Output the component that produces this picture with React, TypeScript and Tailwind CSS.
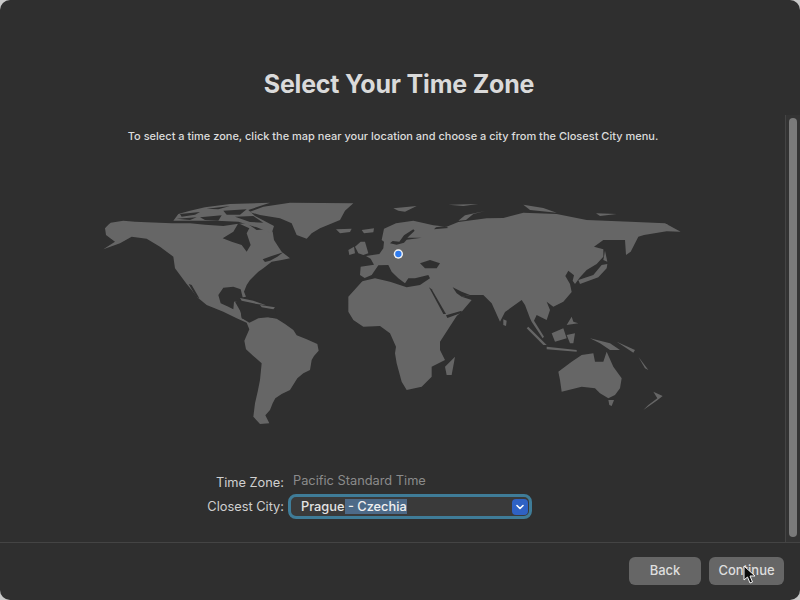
const LAND = "#666666"
const SEA = "#2f2f2f"

// coordinates are 3x page pixels, origin at page (90,190)
const americas = [
  "M45 115L55 104L62 98L100 92L135 95L170 97L245 100L300 100L345 104L400 108L440 102L470 100L500 120L530 118L548 125L552 150L565 170L575 185L600 205L575 210L545 215L520 235L505 245L495 255L480 270L470 285L462 305L468 320L458 322L452 298L430 290L400 293L385 315L392 340L415 350L430 358L432 335L462 330L445 345L452 365L456 385L478 398L505 385L535 382L560 386L585 402L610 420L620 436L650 448L682 462L686 482L672 498L665 510L660 540L640 550L622 565L600 600L575 612L556 625L548 640L540 660L526 676L538 700L510 702L490 680L495 640L503 605L510 570L515 520L490 498L468 478L463 452L478 418L470 398L440 385L400 365L350 345L320 320L305 300L290 282L270 255L255 235L250 200L230 185L210 170L170 146L125 140L90 160L40 178L75 155L48 135Z",
  "M250 92L265 72L300 62L345 52L420 42L540 38L475 60L495 78L552 108L545 130L500 112L445 95L380 92L300 92Z",
  "M478 66L520 50L600 38L790 40L765 62L750 90L690 115L665 130L650 146L620 135L605 100L570 85L510 75Z",
  "M738 118L785 116L780 126L750 130Z",
]
const americasSea = [
  "M398 145L430 125L445 100L478 115L470 130L482 165L470 185L455 165L425 155Z",
  "M518 208L545 198L580 187L562 200L540 212L525 216Z",
  "M296 282L305 285L328 325L318 320Z",
  "M270 72L330 66L315 74L275 80Z",
  "M330 82L395 76L385 92L345 90Z",
  "M400 62L470 58L450 74L410 74Z",
  "M435 80L490 78L520 98L480 96Z",
  "M260 86L320 82L300 90Z",
  "M350 56L420 48L385 58Z",
  "M435 335L470 322L525 340L555 355L560 385L510 378L478 392L455 385L452 365Z",
]
const caribbean = [
  "M450 324L490 332L528 346L500 342L455 332Z",
  "M510 345L555 352L550 358L515 352Z",
]
const afroEurasia = [
  "M-90 255L-88 230L-48 224L-58 206L-72 198L-32 192L-20 175L-18 155L-25 150L-18 116L18 100L70 92L130 106L170 110L205 96L290 85L340 84L400 68L500 72L590 90L720 95L825 100L872 125L830 124L762 135L745 140L722 185L708 195L705 150L640 150L612 170L640 178L640 200L620 222L590 240L570 262L555 282L548 272L552 256L535 242L526 258L540 282L545 306L520 335L490 350L470 335L480 360L470 390L440 375L432 392L462 440L458 445L425 395L420 385L405 345L395 330L345 366L330 395L305 340L280 315L240 315L215 320L245 330L215 365L200 378L150 455L150 480L165 510L125 530L125 560L95 590L50 600L35 575L20 520L15 490L18 470L0 430L-30 408L-80 410L-110 390L-125 365L-125 320L-75 265Z",
]
const afroEurasiaSea = [
  "M-95 272L-55 255L-35 226L-5 225L5 245L25 265L45 280L55 265L75 265L115 255L120 265L90 285L50 292L0 275L-45 265L-90 275Z",
  "M90 220L120 210L150 220L140 235L105 235Z",
  "M117 292L125 298L168 372L160 372Z",
  "M168 376L215 362L215 368L172 384Z",
  "M188 292L215 305L240 315L215 320L200 310Z",
  "M0 160L8 153L28 155L42 136L70 118L74 122L52 143L95 143L50 149L42 158L20 164Z",
  "M132 118L175 114L165 108L138 112Z",
]
const islands = [
  "M-105 170L-88 155L-75 155L-65 190L-80 195L-95 190Z",
  "M-125 180L-108 170L-105 190L-122 195Z",
  "M-85 120L-48 115L-50 127L-78 130Z",
  "M195 500L185 555L170 555L165 530Z",
  "M10 55L80 48L45 65L25 62Z",
  "M205 92L225 76L285 63L250 72L228 90Z",
  "M175 44L265 42L220 48Z",
  "M400 44L460 54L500 68L420 60Z",
  "M618 70L680 72L630 78Z",
  "M565 270L610 255L635 225L652 222L650 235L625 262L570 282Z",
  "M645 182L652 215L640 210Z",
  "M415 410L470 465L460 465L410 415Z",
  "M470 470L560 480L560 485L470 478Z",
  "M485 430L520 415L530 445L495 455Z",
  "M530 435L555 430L550 460L540 460Z",
  "M535 350L550 395L565 400L530 405L545 380Z",
  "M600 445L660 460L690 480L660 480L630 460Z",
  "M680 455L735 480L730 488L695 465Z",
  "M745 500L775 540L765 535Z",
  "M505 545L545 515L575 495L610 490L615 515L640 515L650 485L670 530L695 565L690 595L675 615L655 625L630 610L615 595L575 590L515 605L510 570Z",
  "M655 630L672 630L665 648L658 645Z",
  "M760 660L800 632L818 618L790 605L802 625L775 645Z",
  "M340 388L350 392L348 408L340 405Z",
  "M825 102L832 102L832 116L826 116Z",
]

function WorldMap() {
  return (
    <svg width="800" height="260" viewBox="-270 0 2400 780" className="block">
      <g fill={LAND}>
        {americas.map((d) => <path key={d} d={d} />)}
      </g>
      <g fill={SEA}>
        {americasSea.map((d) => <path key={d} d={d} />)}
      </g>
      <g fill={LAND}>
        {caribbean.map((d) => <path key={d} d={d} />)}
      </g>
      <g transform="translate(900 0)">
        <g fill={LAND}>
          {afroEurasia.map((d) => <path key={d} d={d} />)}
        </g>
        <g fill={SEA}>
          {afroEurasiaSea.map((d) => <path key={d} d={d} />)}
        </g>
        <g fill={LAND}>
          {islands.map((d) => <path key={d} d={d} />)}
        </g>
        <circle cx="25" cy="192" r="14" fill="#f2f2f2" />
        <circle cx="25" cy="192" r="9.5" fill="#2f7cf0" />
      </g>
    </svg>
  )
}

export default function App() {
  return (
    <div className="w-[800px] h-[600px] bg-[#c9c9c9] font-['Inter','Liberation_Sans',sans-serif]">
      <div className="relative w-full h-full rounded-[10px] overflow-hidden bg-[#2f2f2f] flex flex-col">
        <main className="flex-1 flex flex-col items-center pt-[68px]">
          <h1 className="text-[25px] leading-[32px] font-bold text-[#dadada] tracking-[-0.2px] -ml-[2px]">Select Your Time Zone</h1>
          <p className="mt-[28px] text-[11px] leading-[16px] font-medium text-[#dcdcdc] -ml-[14px]">
            To select a time zone, click the map near your location and choose a city from the Closest City menu.
          </p>
          <div className="mt-[46px]">
            <WorldMap />
          </div>
          <div className="mt-[22px] self-start grid grid-cols-[284px_244px] gap-x-[4px] gap-y-[1px] items-center text-[12.8px] font-normal text-[#d0d0d0]">
            <span className="text-right leading-[18px]">Time Zone:</span>
            <span className="pl-[5px] pb-[3px] leading-[18px] text-[#8b8b8b]">Pacific Standard Time</span>
            <span className="text-right leading-[18px]">Closest City:</span>
            <div className="h-[25px] rounded-[8px] border-[3px] border-[#3f7c98] bg-[#3a3a3a] flex items-center justify-between pl-[10px] pr-[1px]">
              <span className="text-[#e4e4e4] leading-[18px] font-medium">
                Prague<span className="bg-[#4d6a88] text-[#f0f0f0]"> - Czechia</span>
              </span>
              <span className="w-[16px] h-[16px] rounded-[4px] bg-[#2f62c4] flex items-center justify-center">
                <svg width="8" height="6" viewBox="0 0 8 6" fill="none" stroke="#ffffff" strokeWidth="1.6" strokeLinecap="round" strokeLinejoin="round">
                  <path d="M1 1.5L4 4.5L7 1.5" />
                </svg>
              </span>
            </div>
          </div>
        </main>
        <footer className="h-[58px] border-t border-[#444444] flex items-start justify-end gap-[8px] pt-[14px] pr-[16px] text-[13px] font-medium text-[#dedede]">
          <button className="w-[72px] h-[28px] rounded-[6px] bg-[#666666]">Back</button>
          <button className="relative w-[75px] h-[28px] rounded-[6px] bg-[#666666]">
            Continue
            <svg width="14" height="20" viewBox="0 0 14 20" className="absolute left-[34px] top-[8px]">
              <path d="M1 1L1 15L4.5 12L7 18L9.5 17L7 11L12 11Z" fill="#0a0a0a" stroke="#f5f5f5" strokeWidth="1" />
            </svg>
          </button>
        </footer>
        <div className="absolute right-0 top-[115px] w-[15px] h-[427px] border-l border-[#444444] bg-[#333333] pl-[3px] pr-[3px] pt-[3px] pb-[5px]">
          <div className="w-full h-full rounded-full bg-[#7a7a7a]" />
        </div>
      </div>
    </div>
  )
}
